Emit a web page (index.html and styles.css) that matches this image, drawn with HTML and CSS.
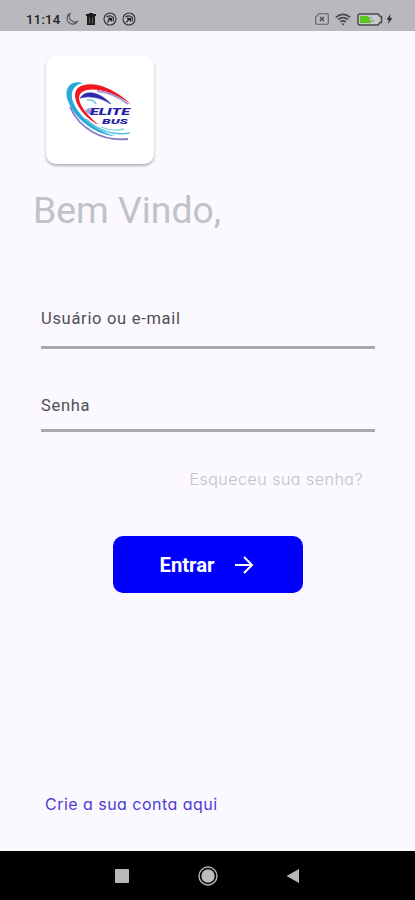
FILE: index.html
```html
<!DOCTYPE html>
<html lang="pt-BR">
<head>
<meta charset="utf-8">
<title>Elite Bus</title>
<link rel="stylesheet" href="styles.css">
</head>
<body>
<header class="status">
  <div class="status-group">
    <span class="clock">11:14</span>
    <svg class="moon" width="14" height="14" viewBox="0 0 14 14"><path d="M5.200 1.300A5.700 5.700 0 1 0 12.700 9.200A5.600 5.600 0 0 1 5.200 1.300Z" fill="none" stroke="#555" stroke-width="1.200" stroke-linejoin="round"/></svg>
    <svg class="trash" width="12" height="14" viewBox="0 0 12 14"><path d="M1 2h3V1h4v1h3v2H1zM2 4h8v9H2z" fill="#1c1c1c"/><path d="M4.500 5.500v6M7.500 5.500v6" stroke="#777" stroke-width=".8"/></svg>
    <svg class="app" width="14" height="14" viewBox="0 0 14 14"><g fill="none" stroke="#333"><circle cx="7" cy="7" r="6" stroke-width="1.100"/><path d="M3.500 5Q7 2.500 10.300 5.500V9.500" stroke-width="1.200"/></g><path d="M5 5.500l4 .5v4L7 8l-2 2.500H3.500L5.500 8z" fill="#222"/></svg>
    <svg class="app" width="14" height="14" viewBox="0 0 14 14"><g fill="none" stroke="#333"><circle cx="7" cy="7" r="6" stroke-width="1.100"/><path d="M3.500 5Q7 2.500 10.300 5.500V9.500" stroke-width="1.200"/></g><path d="M5 5.500l4 .5v4L7 8l-2 2.500H3.500L5.500 8z" fill="#222"/></svg>
  </div>
  <div class="status-group">
    <svg width="14" height="12" viewBox="0 0 14 12"><path d="M4 .7h8q1.300 0 1.300 1.300v8q0 1.300-1.300 1.300H2Q.7 11.300.7 10V4z" fill="none" stroke="#606062" stroke-width="1.100"/><path d="M5 4l4 4M9 4L5 8" stroke="#444" stroke-width="1.200"/></svg>
    <svg class="wifi" width="16" height="13" viewBox="0 0 16 13"><g fill="none" stroke="#48484a" stroke-width="1.700"><path d="M.8 4.300Q8-1.500 15.200 4.300"/><path d="M3 6.700Q8 2.700 13 6.700"/><path d="M5.300 9Q8 6.800 10.700 9"/></g><circle cx="8" cy="11.300" r="1" fill="#48484a"/></svg>
    <svg class="battery" width="26" height="13" viewBox="0 0 26 13"><path d="M3 1h18l2 2.500h1.500v6H23L21 12H3Q1 12 1 10V3Q1 1 3 1z" fill="#c9cacb" stroke="#49494b" stroke-width="1.500"/><path d="M3 3h8l3 7H3z" fill="#5ac51d"/><path d="M11 5h4M12 8h5" stroke="#6f9a68"/></svg>
    <svg class="bolt" width="7" height="12" viewBox="0 0 7 12"><path d="M4.500 1L.5 6.800h2.300L2 11l4.500-6H4z" fill="#333"/></svg>
  </div>
</header>
<main class="screen">
  <div class="logo-card">
    <svg width="68" height="62" viewBox="0 0 68 62">
      <path d="M17 1C5-2-3 6 2 19C8 36 29 53 49 54C30 49 14 35 8 22C3 11 7 3 17 1Z" fill="#25a9db"/>
      <path d="M66 23C49 7 31 0 18 3C5 6 7 20 19 33C23 37 28 41 33 43C18 31 9 17 15 11C23 3 47 9 66 23Z" fill="#f01820"/>
      <path d="M31 9Q48 11 62 22" fill="none" stroke="#a69cd6" stroke-width="2"/>
      <path d="M14 16C20 7 34 10 45 22Q29 12 14 16Z" fill="#2927ac" stroke="#2927ac" stroke-width=".6"/>
      <path d="M21 18Q27 17 30 22" fill="none" stroke="#74c5e9" stroke-width="1.500"/>
      <path d="M4 25C13 46 36 60 62 57" fill="none" stroke="#8a7bc5" stroke-width="1.800"/>
      <path d="M20 37Q39 55 64 51" fill="none" stroke="#54c4e0" stroke-width="1.700"/>
      <path d="M35 45Q46 50 58 47" fill="none" stroke="#78d3e8" stroke-width="1.300"/>
      <path d="M19 29Q22 25 29 26L27 32Q21 33 19 29Z" fill="#a4a0da"/>
      <text x="24" y="32.500" class="brand" textLength="40" lengthAdjust="spacingAndGlyphs">ELITE</text>
      <text x="36" y="41.800" class="brand small" textLength="26" lengthAdjust="spacingAndGlyphs">BUS</text>
    </svg>
  </div>
  <h1>Bem Vindo,</h1>
  <form class="login">
    <div class="field user">Usuário ou e-mail</div>
    <div class="field pass">Senha</div>
    <a class="forgot">Esqueceu sua senha?</a>
    <button type="button" class="enter"><span>Entrar</span>
      <svg width="20" height="20" viewBox="0 0 20 20"><path d="M1 10h17M10 2l8 8-8 8" fill="none" stroke="#fff" stroke-width="2"/></svg>
    </button>
  </form>
  <a class="signup">Crie a sua conta aqui</a>
</main>
<nav class="system">
  <svg width="14" height="14"><rect width="14" height="14" rx="1" fill="#b9b9b9"/></svg>
  <svg width="20" height="20" viewBox="0 0 20 20"><circle cx="10" cy="10" r="9" fill="none" stroke="#b5b5b5" stroke-width="1.400"/><circle cx="10" cy="10" r="6.700" fill="#bdbdbd"/></svg>
  <svg width="14" height="16" viewBox="0 0 14 16"><path d="M.5 8L13 1v14z" fill="#b9b9b9"/></svg>
</nav>
</body>
</html>
```

FILE: styles.css
```css
* { box-sizing: border-box; }
body {
  margin: 0;
  width: 415px;
  height: 900px;
  display: flex;
  flex-direction: column;
  background: #fbf8ff;
  font-family: Roboto, sans-serif;
  overflow: hidden;
}
svg { display: block; flex: none; }
.status {
  height: 31px;
  padding: 7px 22px 0 26px;
  display: flex;
  justify-content: space-between;
  background: #bab8bd;
}
.status-group { display: flex; align-items: center; height: 24px; }
.clock { width: 39px; font-size: 13px; font-weight: 500; letter-spacing: .3px; color: #222; }
.trash { margin-left: 6px; }
.app { margin-left: 5px; }
.trash + .app { margin-left: 6px; }
.wifi { margin-left: 6px; }
.battery { margin-left: 6px; }
.bolt { margin-left: 3px; }
.screen { flex: 1; display: flex; flex-direction: column; }
.logo-card {
  width: 108px;
  height: 108px;
  margin: 25px 0 0 46px;
  padding: 26px 0 0 20px;
  border-radius: 10px;
  background: #fff;
  box-shadow: 0 2px 3px rgba(0, 0, 0, .28);
}
.brand { font: italic 900 9px Roboto, sans-serif; fill: #2620a5; }
.small { font-size: 8px; }
h1 {
  margin: 24px 0 0 33px;
  font-size: 37.300px;
  line-height: 44px;
  font-weight: 400;
  color: #bfc3c5;
}
.login { display: flex; flex-direction: column; margin: 77px 40px 0 41px; }
.field {
  font-size: 16.500px;
  line-height: 20px;
  letter-spacing: .7px;
  color: #504f53;
  border-bottom: 3px solid #aaa8ad;
}
.user { height: 40px; }
.pass { margin-top: 47px; height: 36px; }
.forgot, .signup { font-family: Inter, sans-serif; font-feature-settings: "cv11"; line-height: 20px; }
.forgot {
  align-self: flex-end;
  margin: 37px 12px 0 0;
  font-size: 16px;
  font-weight: 300;
  letter-spacing: .5px;
  color: #c3c2c7;
}
.enter {
  align-self: center;
  width: 190px;
  height: 57px;
  margin-top: 47px;
  padding: 0 3px 0 0;
  border: 0;
  border-radius: 10px;
  display: flex;
  justify-content: center;
  align-items: center;
  gap: 19px;
  background: #0000fe;
  color: #fff;
  font: 700 20.300px Roboto, sans-serif;
}
.signup { margin: auto 0 37px 45px; font-size: 16px; letter-spacing: .47px; color: #4a3fd0; }
.system {
  height: 49px;
  padding: 0 115px;
  display: flex;
  justify-content: space-between;
  align-items: center;
  background: #000;
}
```
